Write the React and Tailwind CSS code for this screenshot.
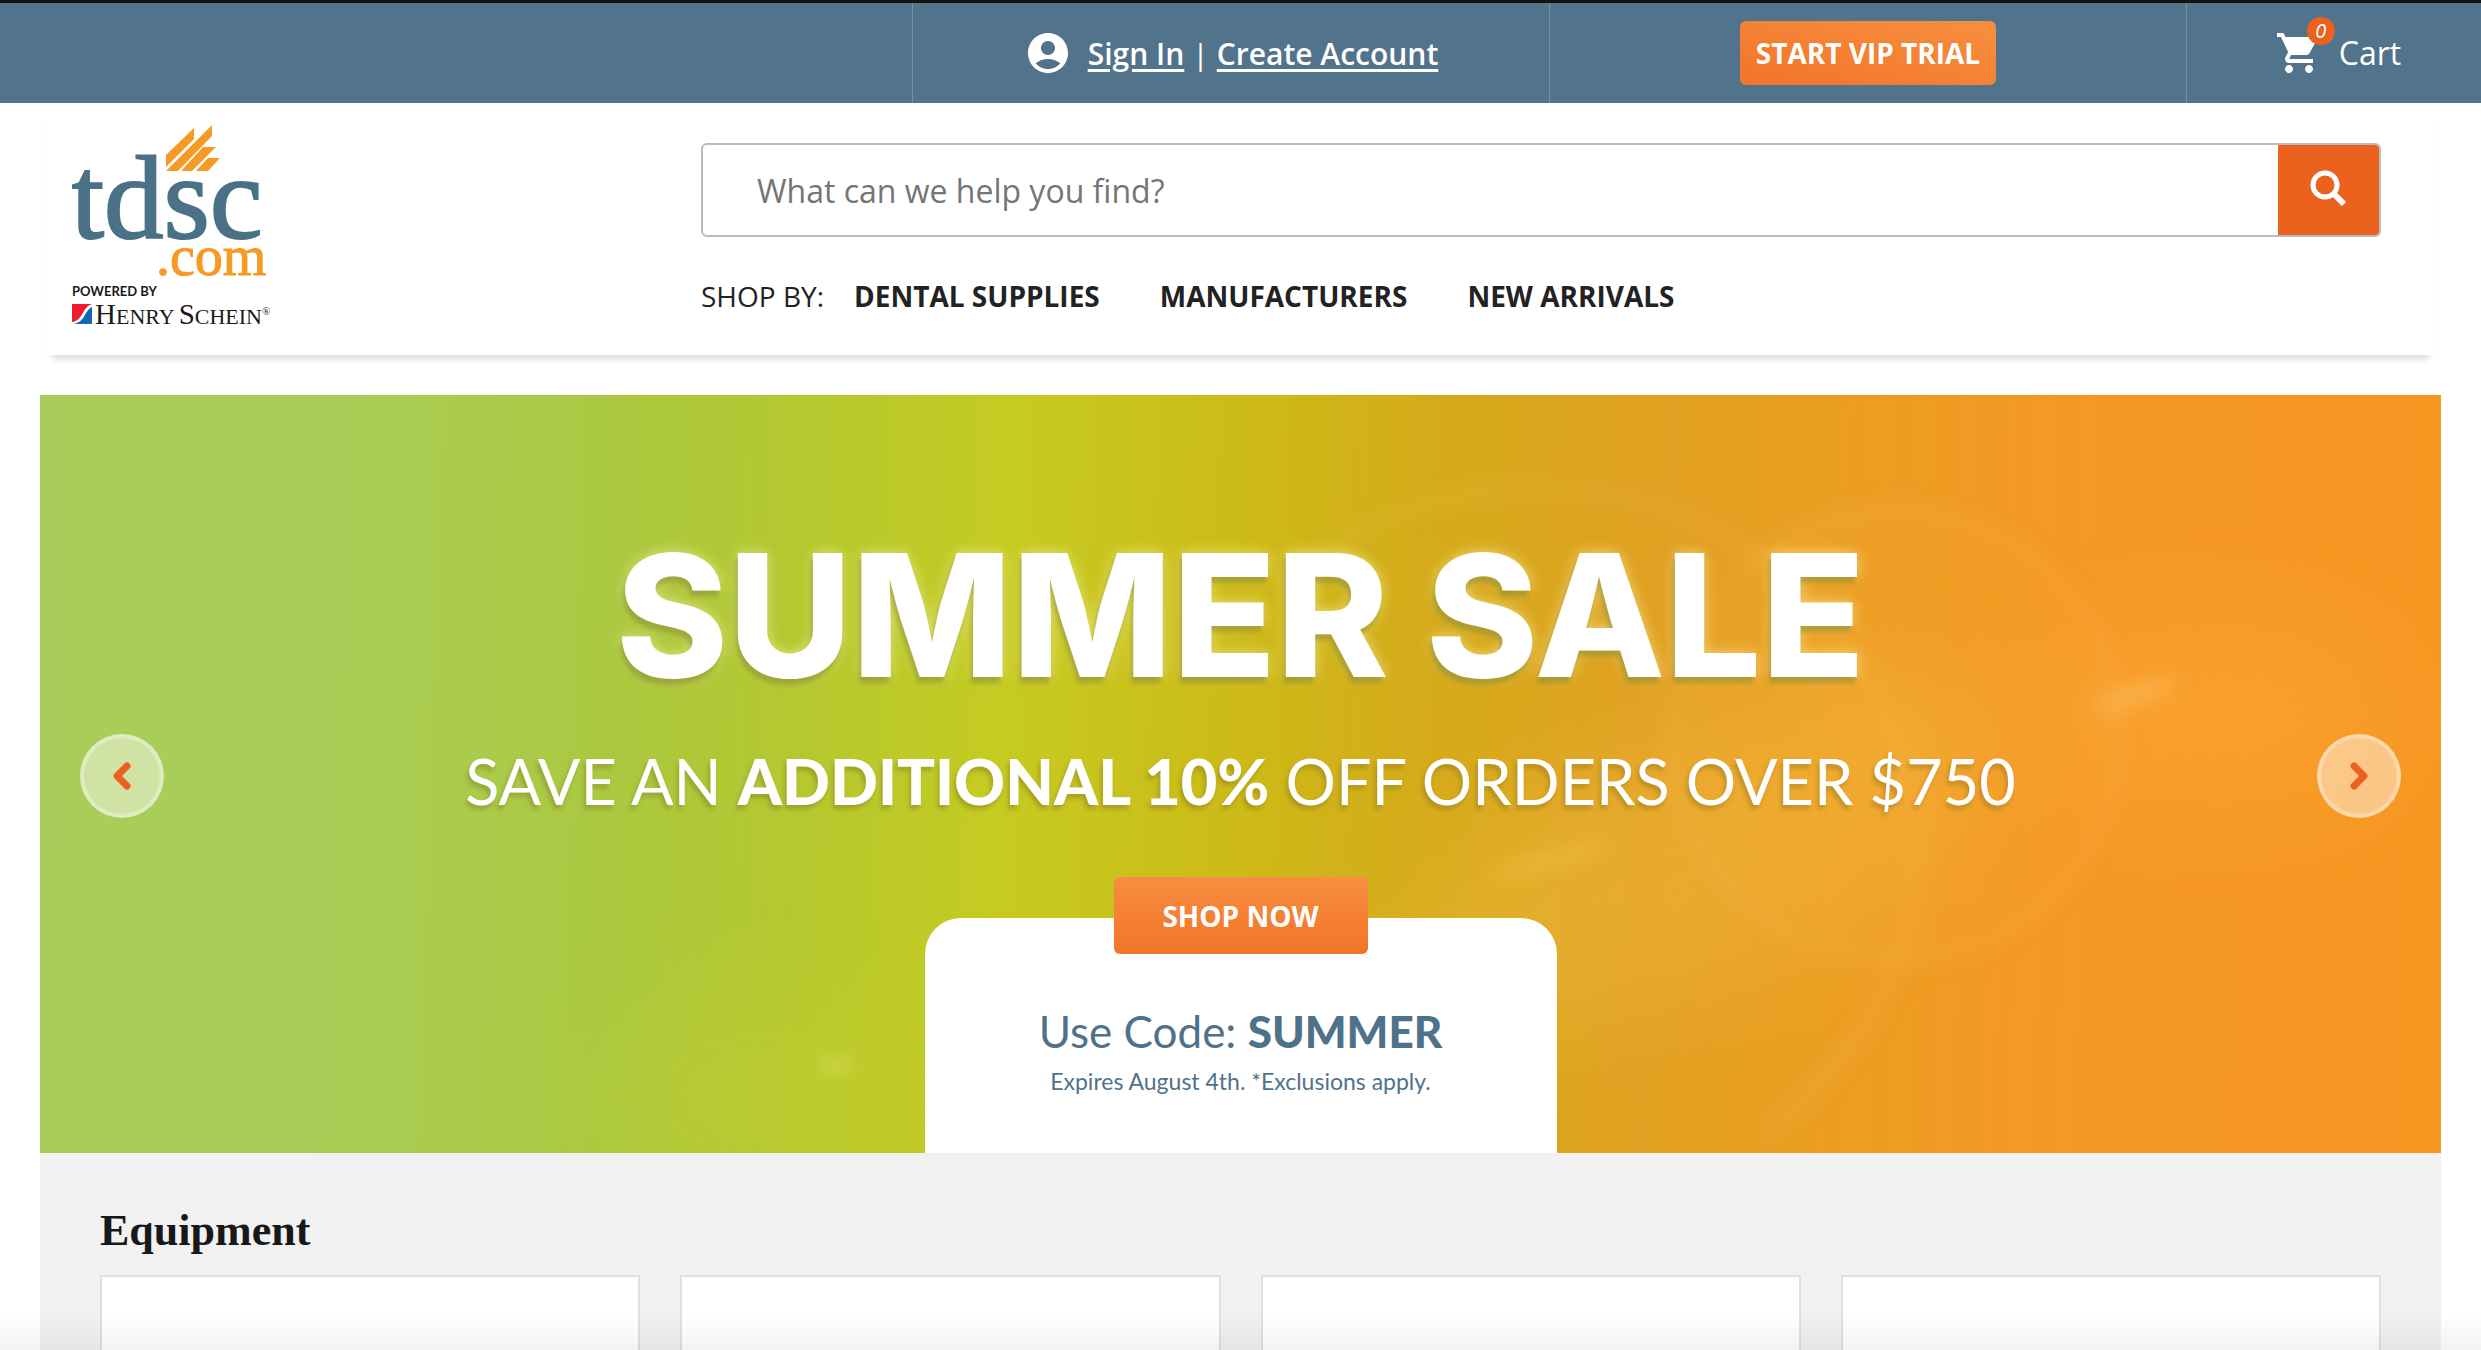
// src/App.jsx
import { MdAccountCircle, MdShoppingCart } from "react-icons/md";

const shopLinks = ["DENTAL SUPPLIES", "MANUFACTURERS", "NEW ARRIVALS"];
const equipment = [1, 2, 3, 4];

function Logo() {
  return (
    <svg viewBox="0 0 208 206" className="w-[208px] h-[206px]" role="img" aria-label="tdsc.com powered by Henry Schein">
      {/* Flame */}
      <g fill="#f59a24">
        <path d="M94 30 L122 3 V14 L94 42 Z" />
        <path d="M140 0 V11 L106 46 H94 Z" />
        <path d="M131 22 H144 L120 46 H109 Z" />
        <path d="M136 33 H148 L136 46 H124 Z" />
      </g>
      <g fontFamily="'Liberation Serif', serif">
        <text x="-1" y="113" fontSize="119" fill="#4a7186" stroke="#4a7186" strokeWidth="2">tdsc</text>
        <text x="84" y="150" fontSize="56" fill="#f59a24" stroke="#f59a24" strokeWidth="1">.com</text>
      </g>
      <text x="0" y="171" fontSize="13" fontWeight="700" fontFamily="Lato, sans-serif" fill="#1a1a1a">POWERED BY</text>
      {/* Henry Schein mark */}
      <path d="M0 179 H20 C10 182 11 196 0 197 Z" fill="#ee1c2e" />
      <path d="M20 182 V199 H2 C14 196 12 186 20 182 Z" fill="#0f69b4" />
      <text x="23" y="199" fontFamily="'Liberation Serif', serif" fill="#1a1a1a">
        <tspan fontSize="29">H</tspan>
        <tspan fontSize="22">ENRY</tspan>
        <tspan fontSize="29" dx="4">S</tspan>
        <tspan fontSize="22">CHEIN</tspan>
        <tspan fontSize="11" dy="-9">®</tspan>
      </text>
    </svg>
  );
}

function TopBar() {
  return (
    <div className="grid grid-cols-[912fr_637fr_637fr_295fr] h-[103px] border-t-[3px] border-[#111413] bg-[#52738c] text-white text-[30px]">
      <div />
      <div className="flex items-center justify-center gap-4 border-l border-[#7592a2] font-semibold">
        <MdAccountCircle className="size-12" />
        <div className="flex items-center gap-2">
          <a href="#signin" className="underline underline-offset-4">Sign In</a>
          <span className="font-normal">|</span>
          <a href="#create" className="underline underline-offset-4">Create Account</a>
        </div>
      </div>
      <div className="flex items-center justify-center border-l border-[#7592a2]">
        <button className="h-16 px-4 rounded-md bg-linear-to-tr from-[#f27427] to-[#f78f40] text-[28px] font-bold">
          START VIP TRIAL
        </button>
      </div>
      <div className="flex items-center justify-center border-l border-[#7592a2] pl-2">
        <a href="#cart" className="relative flex items-center gap-4 text-[32px]">
          <MdShoppingCart className="size-12" />
          <span className="absolute -top-3 left-8 size-7 rounded-full bg-[#eb611e] text-center text-[20px] leading-7 italic">0</span>
          Cart
        </a>
      </div>
    </div>
  );
}

function Header() {
  return (
    <header className="flex mx-12 pl-6 pr-[52px] pt-[22px] h-[252px] bg-white shadow-[0_9px_6px_-4px_#dfe2e1]">
      <div className="w-[629px] shrink-0">
        <Logo />
      </div>
      <div className="flex-1 pt-[18px]">
        <form className="flex h-[94px] rounded-md border-2 border-[#bbb] overflow-hidden" onSubmit={e => e.preventDefault()}>
          <input
            type="text"
            aria-label="Search"
            placeholder="What can we help you find?"
            className="flex-1 px-[54px] pt-[2px] text-[32px] placeholder:text-[#757575] outline-none"
          />
          <button aria-label="Submit search" className="flex w-[101px] items-center justify-center bg-[#eb611e] pb-1">
            <svg viewBox="0 0 37 37" className="size-[37px]" fill="none" stroke="#fff">
              <circle cx="15" cy="15" r="12" strokeWidth="5" />
              <path d="M23 23 L34 34" strokeWidth="6" />
            </svg>
          </button>
        </form>
        <nav className="flex items-center pt-[39px] text-[28px] leading-10 text-[#222]">
          <span className="mr-[30px]">SHOP BY:</span>
          <div className="flex gap-15 font-bold">
            {shopLinks.map(name => (
              <a key={name} href="#shop">{name}</a>
            ))}
          </div>
        </nav>
      </div>
    </header>
  );
}

// Soft lens flares over the banner gradient
function Flares() {
  return (
    <svg viewBox="0 0 2400 758" preserveAspectRatio="none" className="absolute inset-0 size-full" aria-hidden="true">
      <defs>
        <filter id="soft" x="-20%" y="-100%" width="140%" height="300%">
          <feGaussianBlur stdDeviation="9" />
        </filter>
        <filter id="softer" x="-50%" y="-50%" width="200%" height="200%">
          <feGaussianBlur stdDeviation="50" />
        </filter>
      </defs>
      <ellipse cx="1660" cy="460" rx="330" ry="130" fill="#f6c04a" opacity="0.3" transform="rotate(-25 1660 460)" filter="url(#softer)" />
      <ellipse cx="2160" cy="320" rx="180" ry="90" fill="#ffb545" opacity="0.25" filter="url(#softer)" />
      <ellipse cx="720" cy="700" rx="160" ry="100" fill="#d4d430" opacity="0.2" filter="url(#softer)" />
      <g filter="url(#soft)">
        <circle cx="1855" cy="340" r="227" fill="#ffb54a" fillOpacity="0.07" stroke="#ffc46a" strokeOpacity="0.13" strokeWidth="12" />
        <path d="M1240 200 C1340 80 1560 60 1700 150 C1900 280 1960 560 1720 740" fill="none" stroke="#ffd070" strokeOpacity="0.1" strokeWidth="20" />
        <ellipse cx="2095" cy="300" rx="45" ry="12" fill="#ffd080" opacity="0.3" transform="rotate(-16 2095 300)" />
        <ellipse cx="1510" cy="465" rx="65" ry="9" fill="#ffd860" opacity="0.25" transform="rotate(-14 1510 465)" />
        <ellipse cx="795" cy="670" rx="16" ry="5" fill="#f0f080" opacity="0.6" />
      </g>
    </svg>
  );
}

function ArrowButton({ label, d, className }) {
  return (
    <button
      aria-label={label}
      className={`absolute top-[339px] flex size-[84px] items-center justify-center rounded-full border-4 border-white/30 bg-white/45 ${className}`}
    >
      <svg viewBox="0 0 18 28" className="w-[18px] h-7" fill="none" stroke="#eb611e" strokeWidth="7" strokeLinecap="round" strokeLinejoin="round">
        <path d={d} />
      </svg>
    </button>
  );
}

function Banner() {
  return (
    <section className="relative mt-10 mx-10 flex h-[758px] flex-col items-center justify-end overflow-hidden bg-[linear-gradient(92deg,#a9cd5a_0%,#a9cd57_12%,#abc840_24%,#b5c82e_32%,#c5cb22_40%,#cdba17_50%,#d4ac1a_57%,#e0a121_66%,#ec9e22_75%,#f69825_85%,#f79823_100%)] text-white">
      <Flares />
      <h1 className="relative font-[Inter] text-[170px] leading-[180px] font-extrabold [text-shadow:-2px_6px_5px_#7a7a2080,0_0_14px_#fff8b0a0]">
        SUMMER SALE
      </h1>
      <p className="relative mt-9 font-[Lato] text-[63px] leading-[80px] [text-shadow:-2px_4px_4px_#7a6a2066]">
        SAVE AN <strong className="font-black">ADDITIONAL 10%</strong> OFF ORDERS OVER $750
      </p>
      <button className="relative z-10 mt-14 -mb-9 h-[77px] w-[254px] rounded-md bg-linear-to-b from-[#f78d40] to-[#f27427] text-[28px] font-bold">
        SHOP NOW
      </button>
      <div className="relative flex h-[235px] w-[632px] flex-col items-center rounded-t-[36px] bg-white pt-[87px] font-[Lato] text-[#4f728b]">
        <p className="text-[44px] leading-[52px]">
          Use Code: <strong className="font-black">SUMMER</strong>
        </p>
        <p className="mt-2 text-[23px] leading-8">Expires August 4th. *Exclusions apply.</p>
      </div>
      <ArrowButton label="Previous slide" d="M14 4 L4 14 L14 24" className="left-10" />
      <ArrowButton label="Next slide" d="M4 4 L14 14 L4 24" className="right-10" />
    </section>
  );
}

function Equipment() {
  return (
    <section className="mx-10 flex flex-1 flex-col bg-[#f1f1f1] px-[60px] pt-12">
      <h2 className="font-['Liberation_Serif'] text-[44px] leading-[60px] font-bold text-[#181818]">Equipment</h2>
      <div className="mt-[14px] grid flex-1 grid-cols-4 gap-10">
        {equipment.map(id => (
          <div key={id} className="border-2 border-b-0 border-[#e0e0e0] bg-white" />
        ))}
      </div>
    </section>
  );
}

function App() {
  return (
    <div className="relative flex min-h-screen flex-col bg-white font-['Open_Sans',sans-serif]">
      <TopBar />
      <Header />
      <Banner />
      <Equipment />
      <div className="pointer-events-none absolute inset-x-0 bottom-0 h-9 bg-linear-to-b from-transparent to-black/5" />
    </div>
  );
}

export default App;
